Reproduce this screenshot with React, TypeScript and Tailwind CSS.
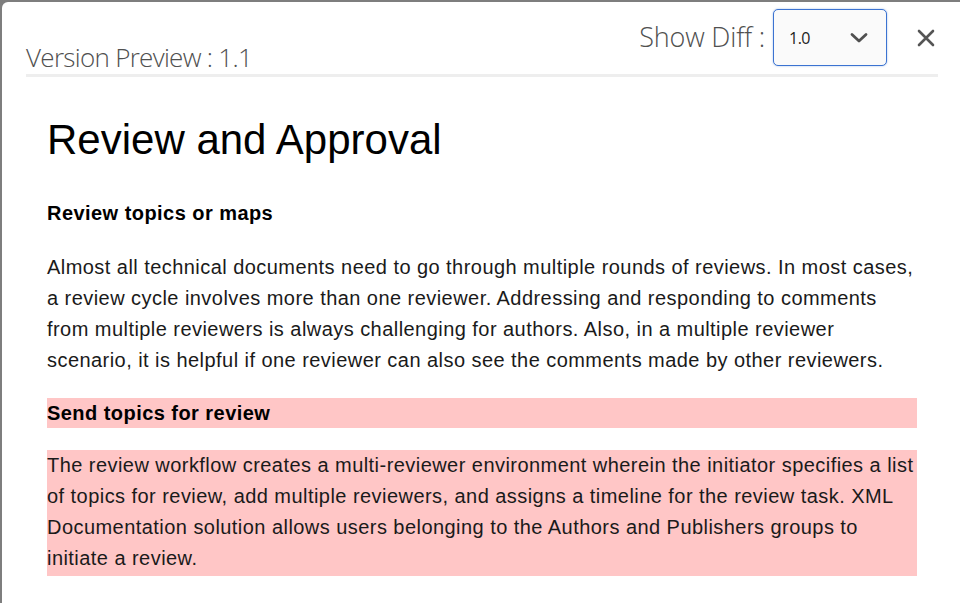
const intro =
    "Almost all technical documents need to go through multiple rounds of reviews. In most cases, a review cycle involves more than one reviewer. Addressing and responding to comments from multiple reviewers is always challenging for authors. Also, in a multiple reviewer scenario, it is helpful if one reviewer can also see the comments made by other reviewers.";

const sendText =
    "The review workflow creates a multi-reviewer environment wherein the initiator specifies a list of topics for review, add multiple reviewers, and assigns a timeline for the review task. XML Documentation solution allows users belonging to the Authors and Publishers groups to initiate a review.";

const lightFont = { fontFamily: "'Open Sans', 'Liberation Sans', sans-serif" };

function DiffSelect() {
    return (
        <div className="flex h-[57px] w-[114px] items-center justify-between rounded-[5px] border border-[#3b73d1] bg-[#fafafa] pl-[15px] pr-[18px] shadow-[0_0_2px_rgba(59,115,209,0.5)]">
            <span className="text-[16px] tracking-[-0.5px] text-[#222]" style={lightFont}>1.0</span>
            <svg width="18" height="12" viewBox="0 0 18 12" className="text-[#505050]" aria-hidden="true">
                <path d="M2 2.5 L9 9 L16 2.5" fill="none" stroke="currentColor" strokeWidth="2.8" strokeLinecap="round" strokeLinejoin="round" />
            </svg>
        </div>
    );
}

function CloseIcon() {
    return (
        <svg width="18" height="18" viewBox="0 0 18 18" className="text-[#555]" aria-hidden="true">
            <path d="M2 2 L16 16 M16 2 L2 16" fill="none" stroke="currentColor" strokeWidth="2.6" strokeLinecap="round" />
        </svg>
    );
}

export default function App() {
    return (
        <div className="h-[603px] w-[960px] overflow-hidden bg-[#7e7e7e] pl-[2px] pt-[2px]">
            <div className="h-full w-full rounded-tl-md bg-white" style={{ fontFamily: "Arial, 'Liberation Sans', sans-serif" }}>
                {/* header */}
                <div className="relative px-[24px]">
                    <div className="flex items-end pt-[39px]">
                        <h1 className="text-[26px] font-light leading-[32px] tracking-[-0.7px] text-[#505050]" style={lightFont}>
                            Version Preview : 1.1
                        </h1>
                    </div>
                    <div className="mt-[1px] h-[3px] w-[912px] bg-[#eeeeee]" />
                    <div className="absolute right-[25px] top-[7px] flex items-center">
                        <span className="mr-[8px] text-[27px] font-light tracking-[-0.2px] text-[#505050]" style={lightFont}>
                            Show Diff :
                        </span>
                        <DiffSelect />
                        <div className="ml-[30px]">
                            <CloseIcon />
                        </div>
                    </div>
                </div>

                {/* body */}
                <div className="pl-[45px] pr-[43px] text-[#1a1a1a]">
                    <h2 className="mt-[39px] text-[42px] leading-[48px] text-black">Review and Approval</h2>
                    <h3 className="mt-[34px] text-[20px] font-bold leading-[30px] tracking-[0.45px] text-black">Review topics or maps</h3>
                    <p className="mt-[24px] text-[20px] leading-[31px] tracking-[0.45px]">{intro}</p>
                    <h3 className="mt-[22px] bg-[#ffc6c6] text-[20px] font-bold leading-[30px] tracking-[0.45px] text-black">Send topics for review</h3>
                    <p className="mt-[22px] bg-[#ffc6c6] pb-[2px] text-[20px] leading-[31px] tracking-[0.45px]">{sendText}</p>
                </div>
            </div>
        </div>
    );
}
